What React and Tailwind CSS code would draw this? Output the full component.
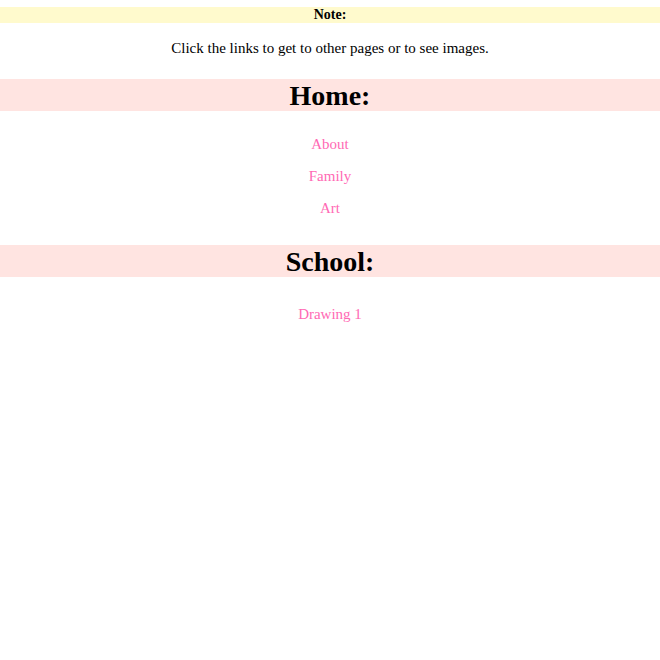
export default function App() {
  const home = ["About", "Family", "Art"];
  const school = ["Drawing 1"];

  return (
    <div className="min-h-[660px] bg-white pt-[7px] text-black font-['Liberation_Serif','Times_New_Roman',serif]">
      {/* note */}
      <div className="h-[16px] bg-[#fffacd] text-center text-[14px] leading-[16px] font-bold">Note:</div>
      <p className="mt-[16px] text-center text-[15px] leading-[18px]">
        Click the links to get to other pages or to see images.
      </p>

      {/* home */}
      <h1 className="mt-[22px] h-[32px] bg-[#ffe4e1] text-center text-[28px] leading-[33px] font-bold">Home:</h1>
      <div className="mt-[17px] flex flex-col items-center">
        {home.map((name) => (
          <a key={name} href="#" className="text-[15px] leading-[32px] text-[#ff69b4]">{name}</a>
        ))}
      </div>

      {/* school */}
      <h1 className="mt-[21px] h-[32px] bg-[#ffe4e1] text-center text-[28px] leading-[33px] font-bold">School:</h1>
      <div className="mt-[21px] flex flex-col items-center">
        {school.map((name) => (
          <a key={name} href="#" className="text-[15px] leading-[32px] text-[#ff69b4]">{name}</a>
        ))}
      </div>
    </div>
  );
}
